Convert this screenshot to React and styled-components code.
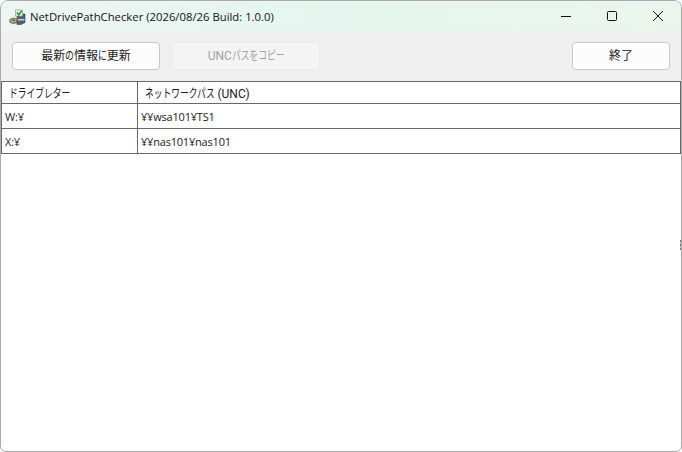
import React from "react";
import styled, { createGlobalStyle } from "styled-components";

const Global = createGlobalStyle`
  html, body { margin: 0; padding: 0; background: #fff; }
  #root { width: 682px; height: 452px; overflow: hidden; }
  * { box-sizing: border-box; }
`;

const FONT = `"Open Sans", "Noto Sans CJK JP", sans-serif`;
const LATIN_FONT = `Roboto, "Noto Sans CJK JP", sans-serif`;
const KANA_SCALE = 0.73;

const Window = styled.div`
  position: relative;
  width: 682px;
  height: 452px;
  display: flex;
  flex-direction: column;
  background: #fff;
  border: 1px solid #ababab;
  border-radius: 8px 8px 6px 6px;
  overflow: hidden;
  font-family: ${FONT};
  font-size: 12px;
  color: #1a1a1a;
`;

const TitleBar = styled.header`
  height: 30px;
  flex: none;
  display: flex;
  align-items: center;
  padding-left: 8px;
  background: linear-gradient(90deg, #eef5f3 0%, #e4f6ef 50%, #ebf5ec 100%);
`;

const AppIcon = styled.svg`
  width: 17px;
  height: 17px;
  flex: none;
  margin-right: 4px;
`;

const Title = styled.h1`
  margin: 0;
  flex: 1;
  font-size: 11.3px;
  font-weight: 400;
  white-space: nowrap;
  color: #111;
`;

const WindowButton = styled.button`
  width: 46px;
  height: 30px;
  padding: 0;
  border: 0;
  background: transparent;
  display: flex;
  align-items: center;
  justify-content: center;
`;

const Toolbar = styled.div`
  height: 50px;
  flex: none;
  display: flex;
  align-items: center;
  gap: 12px;
  padding: 0 11px;
  background: #efefef;
`;

const ActionButton = styled.button`
  width: ${(p) => p.$width}px;
  height: 28px;
  margin-left: ${(p) => (p.$pushRight ? "auto" : "0")};
  padding: 0;
  border: 1px solid ${(p) => (p.disabled ? "#ebebeb" : "#c9c9c9")};
  border-radius: 4px;
  background: ${(p) => (p.disabled ? "#f4f4f4" : "#fcfcfc")};
  color: ${(p) => (p.disabled ? "#a3a3a3" : "#1a1a1a")};
  font-family: ${FONT};
  font-size: 12px;
  line-height: 1;
  white-space: nowrap;
`;

/* Katakana and hiragana are set narrower than kanji in the reference's UI font. */
const Kana = styled.span`
  display: inline-block;
  transform: scaleX(${KANA_SCALE});
  transform-origin: left center;
  margin-right: ${(p) => -p.$n * (1 - KANA_SCALE)}em;
`;

const Latin = styled.span`
  font-family: ${LATIN_FONT};
  font-size: 12px;
`;

const Table = styled.table`
  width: 680px;
  border-collapse: collapse;
  table-layout: fixed;
  background: #fff;
  flex: none;
`;

const HeadCell = styled.th`
  height: 22px;
  padding: 0 0 0 7px;
  border: 1px solid #696969;
  font-size: 12px;
  font-weight: 400;
  text-align: left;
  color: #1a1a1a;
  white-space: nowrap;
`;

const Cell = styled.td`
  height: 25px;
  padding: 0 0 0 3px;
  border: 1px solid #696969;
  font-size: 11px;
  letter-spacing: -0.2px;
  color: #1a1a1a;
  white-space: nowrap;
`;

const Grip = styled.span`
  position: absolute;
  right: 0;
  top: 239px;
  width: 1px;
  height: 10px;
  background: repeating-linear-gradient(#777 0 2px, #bbb 2px 4px);
`;

const rows = [
  ["W:¥", "¥¥wsa101¥TS1"],
  ["X:¥", "¥¥nas101¥nas101"],
];

export default function App() {
  return (
    <>
      <Global />
      <Window>
        <TitleBar>
          <AppIcon viewBox="0 0 17 17" aria-hidden="true">
            <ellipse cx="4.5" cy="12.8" rx="4" ry="2.6" fill="#b8a67e" stroke="#5d5040" strokeWidth="0.8" />
            <ellipse cx="4.5" cy="12.3" rx="1.3" ry="0.8" fill="#4e4a40" />
            <path d="M8 6h8v8.5L12 16.5H8z" fill="#56616f" stroke="#2f3640" strokeWidth="0.6" />
            <path d="M8.5 11h7v1.5h-7z" fill="#c6ccd3" />
            <rect x="6.5" y="2" width="7" height="6" fill="#eef2ee" stroke="#8a9488" strokeWidth="0.6" />
            <path d="M7.8 4.5l2 2.2 3-4" fill="none" stroke="#1d9a3a" strokeWidth="1.6" />
          </AppIcon>
          <Title>NetDrivePathChecker (2026/08/26 Build: 1.0.0)</Title>
          <WindowButton aria-label="最小化">
            <svg width="10" height="10" viewBox="0 0 10 10"><path d="M0 5.5h10" stroke="#111" strokeWidth="1" /></svg>
          </WindowButton>
          <WindowButton aria-label="最大化">
            <svg width="10" height="10" viewBox="0 0 10 10"><rect x="0.5" y="0.5" width="9" height="9" rx="1" fill="none" stroke="#111" strokeWidth="1" /></svg>
          </WindowButton>
          <WindowButton aria-label="閉じる">
            <svg width="10" height="10" viewBox="0 0 10 10"><path d="M0 0l10 10M10 0L0 10" stroke="#111" strokeWidth="1" /></svg>
          </WindowButton>
        </TitleBar>
        <Toolbar>
          <ActionButton $width={148}>最新<Kana $n={1}>の</Kana>情報<Kana $n={1}>に</Kana>更新</ActionButton>
          <ActionButton $width={148} disabled><Latin>UNC</Latin><Kana $n={6}>パスをコピー</Kana></ActionButton>
          <ActionButton $width={98} $pushRight>終了</ActionButton>
        </Toolbar>
        <Table>
          <colgroup>
            <col style={{ width: 136 }} />
            <col />
          </colgroup>
          <thead>
            <tr>
              <HeadCell><Kana $n={7}>ドライブレター</Kana></HeadCell>
              <HeadCell><Kana $n={8}>ネットワークパス</Kana><Latin> (UNC)</Latin></HeadCell>
            </tr>
          </thead>
          <tbody>
            {rows.map(([drive, path]) => (
              <tr key={drive}>
                <Cell>{drive}</Cell>
                <Cell>{path}</Cell>
              </tr>
            ))}
          </tbody>
        </Table>
        <Grip />
      </Window>
    </>
  );
}
